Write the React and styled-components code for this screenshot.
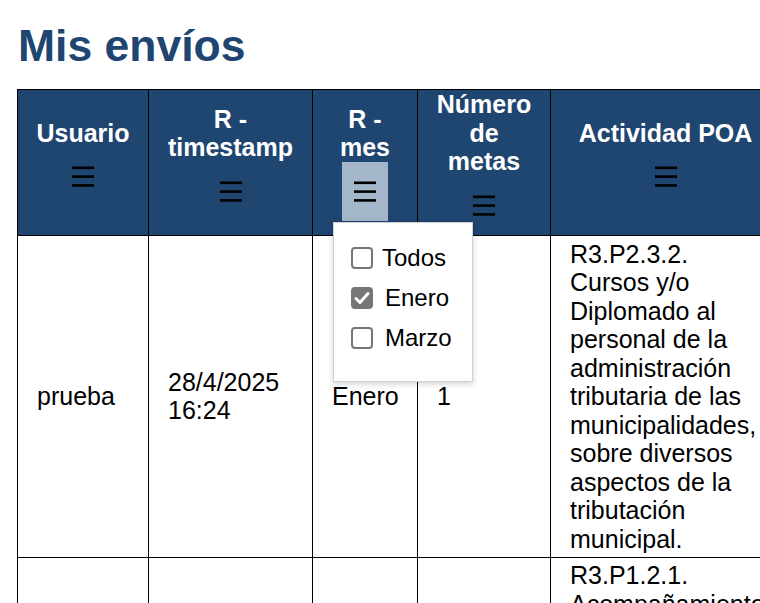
import styled, { createGlobalStyle } from "styled-components";

const GlobalStyle = createGlobalStyle`
  html, body {
    margin: 0;
    padding: 0;
    overflow: hidden;
    background: #fff;
    font-family: "Liberation Sans", Arial, sans-serif;
  }
`;

const Page = styled.main`
  padding: 21px 0 0 17px;
`;

const Title = styled.h1`
  margin: 0 0 18px 1px;
  font-size: 44.5px;
  font-weight: 700;
  color: #1f4571;
  line-height: normal;
`;

const Table = styled.table`
  border-collapse: collapse;
  table-layout: fixed;
  width: 763px;
  font-size: 25px;
  line-height: normal;
`;

const Head = styled.th`
  background: #1f4571;
  color: #fff;
  font-weight: 700;
  border: 1px solid #000;
  padding: 0 14px;
  height: 145px;
  line-height: 28.5px;
  text-align: center;
  vertical-align: middle;
  position: relative;
`;

const HeadInner = styled.div`
  display: flex;
  flex-direction: column;
  align-items: center;
`;

const FilterButton = styled.button`
  width: 46px;
  height: 59px;
  border: none;
  padding: 0;
  background: ${({ $active }) => ($active ? "#a4b6c9" : "transparent")};
  display: flex;
  align-items: center;
  justify-content: center;
  cursor: pointer;
`;

const MenuIcon = () => (
  <svg width="22" height="21" viewBox="0 0 22 21">
    <rect x="0" y="0.5" width="22" height="2.6" fill="#000" />
    <rect x="0" y="9.3" width="22" height="2.6" fill="#000" />
    <rect x="0" y="18.1" width="22" height="2.6" fill="#000" />
  </svg>
);

const Cell = styled.td`
  border: 1px solid #000;
  padding: 3.5px 19px;
  line-height: 28.5px;
  vertical-align: middle;
  color: #000;
  text-align: left;
`;

const Menu = styled.div`
  position: absolute;
  left: 20px;
  top: 132px;
  width: 140px;
  box-sizing: border-box;
  padding: 15px 0 23px 17px;
  background: #fff;
  border: 1px solid #d0d0d0;
  box-shadow: 0 2px 6px rgba(0, 0, 0, 0.18);
  z-index: 5;
  text-align: left;
  line-height: normal;
`;

const Option = styled.label`
  display: flex;
  align-items: center;
  gap: ${({ $tight }) => ($tight ? "9px" : "12px")};
  height: 40px;
  font-weight: 400;
  font-size: 24px;
  color: #000;
`;

const Box = styled.span`
  width: 18px;
  height: 18px;
  border: 2px solid #767676;
  border-radius: 4px;
  background: ${({ $checked }) => ($checked ? "#767676" : "#fff")};
  display: flex;
  align-items: center;
  justify-content: center;
  flex-shrink: 0;
`;

const Check = () => (
  <svg width="18" height="18" viewBox="0 0 18 18" fill="none">
    <path
      d="M3 9.5l4 4 8-9"
      stroke="#fff"
      strokeWidth="3"
      strokeLinecap="round"
      strokeLinejoin="round"
    />
  </svg>
);

const columns = [
  { key: "usuario", label: "Usuario", width: 131 },
  { key: "ts", label: "R - timestamp", width: 164 },
  { key: "mes", label: "R - mes", width: 105, active: true },
  { key: "metas", label: "Número de metas", width: 133 },
  { key: "poa", label: "Actividad POA", width: 230 },
];

const rows = [
  {
    usuario: "prueba",
    ts: ["28/4/2025", "16:24"],
    mes: "Enero",
    metas: "1",
    poa: "R3.P2.3.2. Cursos y/o Diplomado al personal de la administración tributaria de las municipalidades, sobre diversos aspectos de la tributación municipal.",
  },
  {
    usuario: "prueba",
    ts: ["28/4/2025", "16:24"],
    mes: "Enero",
    metas: "1",
    poa: "R3.P1.2.1. Acompañamiento técnico a las municipalidades en la actualización de sus registros.",
  },
];

const options = [
  { label: "Todos", checked: false, tight: true },
  { label: "Enero", checked: true },
  { label: "Marzo", checked: false },
];

export default function App() {
  return (
    <>
      <GlobalStyle />
      <Page>
        <Title>Mis envíos</Title>
        <Table>
          <colgroup>
            {columns.map((c) => (
              <col key={c.key} style={{ width: c.width }} />
            ))}
          </colgroup>
          <thead>
            <tr>
              {columns.map((c) => (
                <Head key={c.key}>
                  <HeadInner>
                    <span>{c.label}</span>
                    <FilterButton $active={c.active}>
                      <MenuIcon />
                    </FilterButton>
                  </HeadInner>
                  {c.active && (
                    <Menu>
                      {options.map((o) => (
                        <Option key={o.label} $tight={o.tight}>
                          <Box $checked={o.checked}>{o.checked && <Check />}</Box>
                          {o.label}
                        </Option>
                      ))}
                    </Menu>
                  )}
                </Head>
              ))}
            </tr>
          </thead>
          <tbody>
            {rows.map((r, i) => (
              <tr key={i}>
                <Cell>{r.usuario}</Cell>
                <Cell>
                  {r.ts[0]}
                  <br />
                  {r.ts[1]}
                </Cell>
                <Cell>{r.mes}</Cell>
                <Cell>{r.metas}</Cell>
                <Cell>{r.poa}</Cell>
              </tr>
            ))}
          </tbody>
        </Table>
      </Page>
    </>
  );
}
